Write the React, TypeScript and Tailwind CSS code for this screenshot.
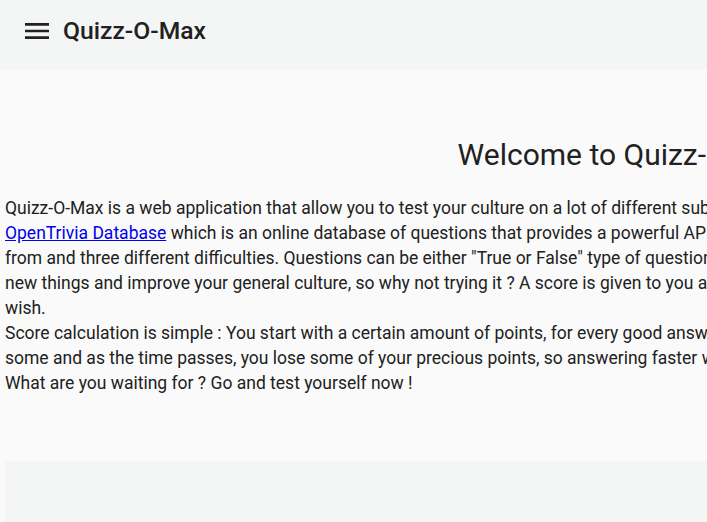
export default function App() {
  return (
    <div className="min-h-screen overflow-hidden bg-[#fafafa] text-[#212121]" style={{ fontFamily: 'Roboto, "Liberation Sans", sans-serif' }}>
      <header className="h-[70px] bg-[#f4f5f5] flex items-start pt-[15px] pl-[21px]">
        <button className="w-[32px] h-[32px] text-[#212121]">
          <svg width="32" height="32" viewBox="0 0 24 24" fill="currentColor">
            <path d="M3 18h18v-2H3v2zm0-5h18v-2H3v2zm0-7v2h18V6H3z" />
          </svg>
        </button>
        <h1 className="ml-[10px] text-[24.7px] leading-[32px] font-medium">Quizz-O-Max</h1>
      </header>

      <main className="w-[1240px] ml-[5px]">
        <h2 className="text-center text-[30px] font-normal pt-[67px] pb-[23px] leading-[36px]">Welcome to Quizz-O-Max</h2>
        <p className="text-[17.5px] leading-[25px] whitespace-nowrap">
          Quizz-O-Max is a web application that allow you to test your culture on a lot of different subjects. It uses the
          <br />
          <a href="#" className="text-[#0000ee] underline">OpenTrivia Database</a> which is an online database of questions that provides a powerful API. You have lots of categories to choose
          <br />
          from and three different difficulties. Questions can be either "True or False" type of questions or multiple choice questions. It's a great way to learn
          <br />
          new things and improve your general culture, so why not trying it ? A score is given to you at the end of the quiz and you can save it if you
          <br />
          wish.
          <br />
          Score calculation is simple : You start with a certain amount of points, for every good answer you get more points, for every bad answer you lose
          <br />
          some and as the time passes, you lose some of your precious points, so answering faster will give you a better score.
          <br />
          What are you waiting for ? Go and test yourself now !
        </p>
        <div className="mt-[65px] h-[80px] bg-[#f4f5f5]" />
      </main>
    </div>
  );
}
